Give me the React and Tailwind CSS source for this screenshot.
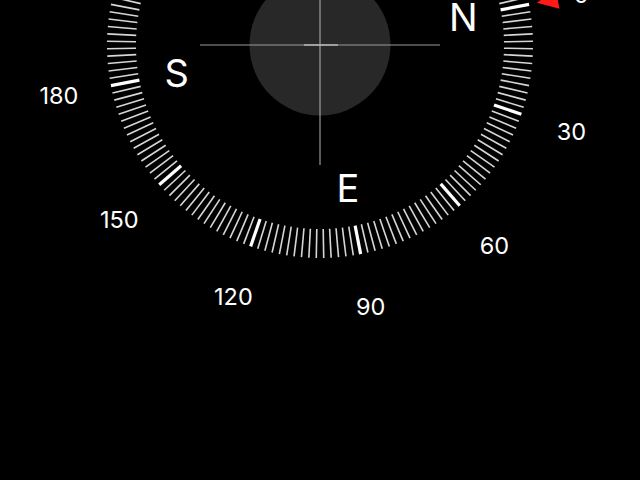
import React from "react";

const CX = 320;
const CY = 45;
const ROT = 79;

function polar(deg, r) {
  const t = ((deg + ROT) * Math.PI) / 180;
  return [CX + r * Math.sin(t), CY - r * Math.cos(t)];
}

export default function App() {
  const ticks = [];
  for (let i = 0; i < 180; i++) {
    const d = i * 2;
    const major = d % 30 === 0;
    ticks.push(
      <line
        key={d}
        x1="0"
        y1="-184"
        x2="0"
        y2="-213"
        stroke={major ? "#ffffff" : "#d6d6d6"}
        strokeWidth={major ? 3.2 : 1.6}
        transform={`rotate(${d + ROT})`}
      />
    );
  }

  const nums = [];
  for (let d = 0; d <= 180; d += 30) {
    const [x, y] = polar(d, 266);
    nums.push(
      <text
        key={"n" + d}
        x={x}
        y={y + 8.6}
        textAnchor="middle"
        fill="#ffffff"
        fontSize="23.5"
        fontFamily="Inter, 'Liberation Sans', sans-serif"
      >
        {d}
      </text>
    );
  }

  const cards = [
    ["N", 0],
    ["E", 90],
    ["S", 180],
  ].map(([l, d]) => {
    const [x, y] = polar(d, 146);
    return (
      <text
        key={l}
        x={x}
        y={y + 14}
        textAnchor="middle"
        fill="#ffffff"
        fontSize="38"
        fontFamily="Inter, 'Liberation Sans', sans-serif"
      >
        {l}
      </text>
    );
  });

  // red north triangle
  const t = ((0 + ROT) * Math.PI) / 180;
  const ux = Math.sin(t);
  const uy = -Math.cos(t);
  const px = Math.cos(t);
  const py = Math.sin(t);
  const tip = [CX + ux * 221, CY + uy * 221];
  const bc = [CX + ux * 242, CY + uy * 242];
  const b1 = [bc[0] + px * 10, bc[1] + py * 10];
  const b2 = [bc[0] - px * 10, bc[1] - py * 10];

  return (
    <div className="w-[640px] h-[480px] bg-black overflow-hidden">
      <svg width="640" height="480" viewBox="0 0 640 480" className="block">
        <circle cx={CX} cy={CY} r="70.5" fill="#282828" />
        <line x1="200" y1={CY} x2="440" y2={CY} stroke="#9a9a9a" strokeWidth="1" />
        <line x1="304" y1={CY} x2="338" y2={CY} stroke="#e0e0e0" strokeWidth="1.2" />
        <line x1={CX} y1="-80" x2={CX} y2="165" stroke="#b5b5b5" strokeWidth="1" />
        <g transform={`translate(${CX} ${CY})`}>{ticks}</g>
        <polygon
          points={`${tip[0]},${tip[1]} ${b1[0]},${b1[1]} ${b2[0]},${b2[1]}`}
          fill="#ff1a1a"
        />
        {cards}
        {nums}
      </svg>
    </div>
  );
}
